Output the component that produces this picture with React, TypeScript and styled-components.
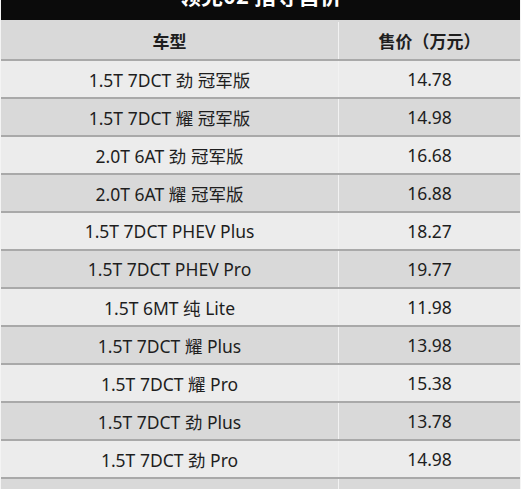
import styled, { createGlobalStyle } from 'styled-components';

const GlobalStyle = createGlobalStyle`
  html, body {
    margin: 0;
    padding: 0;
    background: #ffffff;
  }
  body {
    font-family: "Noto Sans", "Noto Sans CJK SC", sans-serif;
  }
`;

const PriceTable = styled.div`
  width: 521px;
  height: 489px;
  overflow: hidden;
  border-left: 1px solid #f4f4f4;
  border-right: 1px solid #f4f4f4;
  box-sizing: border-box;
`;

const TitleBar = styled.div`
  height: 20px;
  background: #0b0b0b;
  color: #ffffff;
  display: flex;
  justify-content: center;
  overflow: hidden;
`;

const TitleText = styled.span`
  font-family: "Noto Sans CJK SC", sans-serif;
  font-size: 22px;
  font-weight: 700;
  line-height: 22px;
  margin-top: -17px;
`;

const Row = styled.div<{ $shade: 'light' | 'dark' }>`
  display: grid;
  grid-template-columns: 337px 1fr;
  height: 38px;
  box-sizing: border-box;
  border-bottom: 2px solid #a9a9a9;
  background: ${p => (p.$shade === 'light' ? '#ececec' : '#d9d9d9')};
`;

const HeaderRow = styled(Row)`
  height: 41px;
  padding-top: 2px;
`;

const Cell = styled.div<{ $bold?: boolean }>`
  display: flex;
  align-items: center;
  justify-content: center;
  font-size: ${p => (p.$bold ? '17px' : '17.5px')};
  font-weight: ${p => (p.$bold ? 700 : 400)};
  color: #1e1e1e;
  & + & {
    border-left: 1px solid #f2f2f2;
  }
`;

const rows: [string, string][] = [
  ['1.5T 7DCT 劲 冠军版', '14.78'],
  ['1.5T 7DCT 耀 冠军版', '14.98'],
  ['2.0T 6AT 劲 冠军版', '16.68'],
  ['2.0T 6AT 耀 冠军版', '16.88'],
  ['1.5T 7DCT PHEV Plus', '18.27'],
  ['1.5T 7DCT PHEV Pro', '19.77'],
  ['1.5T 6MT 纯 Lite', '11.98'],
  ['1.5T 7DCT 耀 Plus', '13.98'],
  ['1.5T 7DCT 耀 Pro', '15.38'],
  ['1.5T 7DCT 劲 Plus', '13.78'],
  ['1.5T 7DCT 劲 Pro', '14.98'],
  ['', ''],
];

const App = () => (
  <>
    <GlobalStyle />
    <PriceTable>
      <TitleBar>
        <TitleText>领克02 指导售价</TitleText>
      </TitleBar>
      <HeaderRow $shade="dark">
        <Cell $bold>车型</Cell>
        <Cell $bold>售价（万元）</Cell>
      </HeaderRow>
      {rows.map(([model, price], i) => (
        <Row key={i} $shade={i % 2 === 0 ? 'light' : 'dark'}>
          <Cell>{model}</Cell>
          <Cell>{price}</Cell>
        </Row>
      ))}
    </PriceTable>
  </>
);

export default App;
